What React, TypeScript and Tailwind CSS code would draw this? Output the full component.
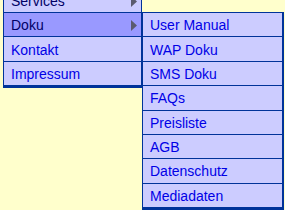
import React from 'react';

type Item = { label: string; sub?: boolean; active?: boolean };

const mainItems: Item[] = [
  { label: 'Services', sub: true },
  { label: 'Doku', sub: true, active: true },
  { label: 'Kontakt' },
  { label: 'Impressum' },
];

const docItems = [
  'User Manual',
  'WAP Doku',
  'SMS Doku',
  'FAQs',
  'Preisliste',
  'AGB',
  'Datenschutz',
  'Mediadaten',
];

function Arrow() {
  return (
    <svg width="6" height="11" viewBox="0 0 6 11" className="ml-auto mr-[4px] shrink-0">
      <polygon points="0,0 6,5.5 0,11" fill="#5a5a6e" />
    </svg>
  );
}

export default function App() {
  return (
    <div
      className="w-[285px] h-[210px] overflow-hidden bg-[#ffffcc] pl-[3px]"
      style={{ fontFamily: '"Liberation Sans", Arial, sans-serif' }}
    >
      <ul className="w-[139px] -mt-[11.375px] border-l border-r border-b-2 border-[#003399] bg-[#ccccff]">
        {mainItems.map((item) => (
          <li
            key={item.label}
            className={`relative flex items-center h-[24.375px] border-b border-[#003399] pl-[7px] pt-[2px] text-[14px] ${
              item.active ? 'bg-[#9999ff] text-[#000066]' : item.sub ? 'text-[#000066]' : 'text-[#0000e6]'
            }`}
          >
            <span>{item.label}</span>
            {item.sub && <Arrow />}
            {item.active && (
              <ul className="absolute left-[calc(100%+1px)] -top-px w-[142px] border-t border-l border-r-2 border-b-2 border-[#003399] bg-[#ccccff]">
                {docItems.map((d) => (
                  <li
                    key={d}
                    className="flex items-center h-[24.375px] border-b border-[#003399] pl-[7px] pt-[2px] text-[14px] text-[#0000e6]"
                  >
                    {d}
                  </li>
                ))}
              </ul>
            )}
          </li>
        ))}
      </ul>
    </div>
  );
}
